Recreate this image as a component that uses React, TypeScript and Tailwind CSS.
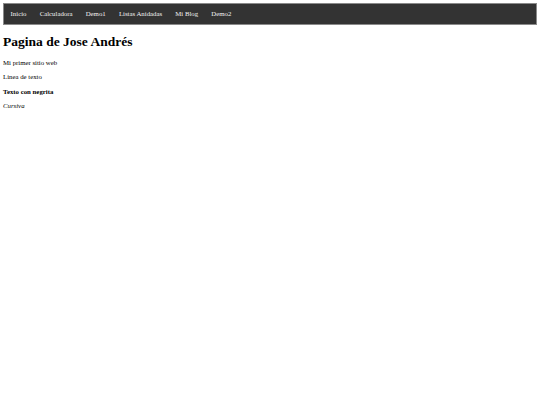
export default function App() {
  const links = ["Inicio", "Calculadora", "Demo1", "Listas Anidadas", "Mi Blog", "Demo2"];

  return (
    <div className="min-h-screen bg-white p-[3px] font-['Liberation_Serif',serif] text-black">
      {/* Nav */}
      <nav className="border border-[#8a8a8a] bg-[#333333]">
        <ul className="flex">
          {links.map((l) => (
            <li key={l}>
              <a href="#" className="block px-[6.6px] py-[6px] text-[6.8px] leading-[8px] text-[#f2f2f2]">
                {l}
              </a>
            </li>
          ))}
        </ul>
      </nav>

      <h1 className="my-[9px] text-[13.5px] font-bold leading-[16px]">Pagina de Jose Andrés</h1>
      <p className="my-[6.4px] text-[6.8px] leading-[8px]">Mi primer sitio web</p>
      <p className="my-[6.4px] text-[6.8px] leading-[8px]">Linea de texto</p>
      <p className="my-[6.4px] text-[6.8px] font-bold leading-[8px]">Texto con negrita</p>
      <p className="my-[6.4px] text-[6.8px] italic leading-[8px]">Cursiva</p>
    </div>
  );
}
